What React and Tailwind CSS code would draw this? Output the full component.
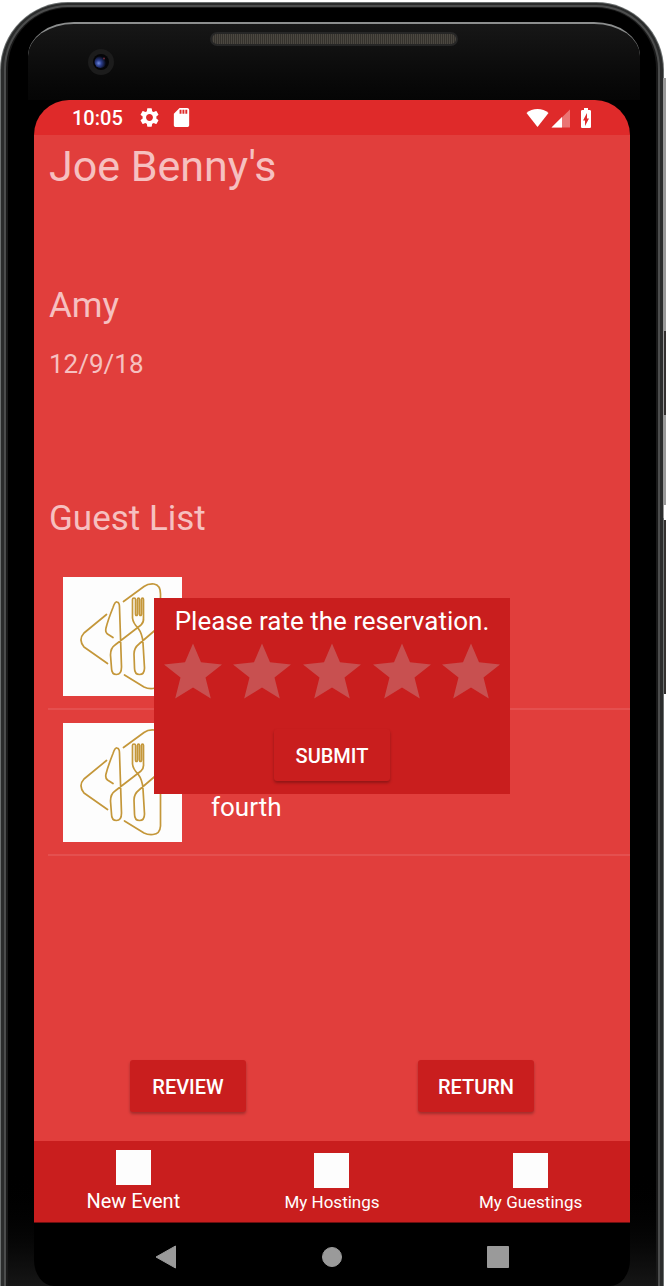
import React from "react";
import { MdSettings, MdSdCard, MdBatteryChargingFull } from "react-icons/md";

function Camera() {
  return (
    <svg viewBox="0 0 26 26" className="mt-[3px] ml-[60px] size-[26px]" aria-hidden="true">
      <defs>
        <radialGradient id="lens" cx="0.35" cy="0.6" r="0.6">
          <stop offset="0" stopColor="#6f8be0" />
          <stop offset="0.4" stopColor="#2b3d8a" />
          <stop offset="1" stopColor="#05060f" />
        </radialGradient>
      </defs>
      <circle cx="13" cy="13" r="13" fill="#1c1c1c" />
      <circle cx="13" cy="13" r="8" fill="#050507" />
      <circle cx="12.5" cy="13" r="6" fill="url(#lens)" />
      <circle cx="16" cy="9.5" r="1" fill="#6b2a3a" />
    </svg>
  );
}

function Hardware() {
  return (
    <div className="pr-[16px] pl-[20px] pt-[14px]">
      <div className="flex h-[78px] flex-col rounded-t-[46px_34px] border-t-2 border-[#8c8e8e] bg-linear-to-b from-[#171717] to-[#050505]">
        <div className="mt-2 h-[14px] w-[248px] self-center rounded-full border-2 border-[#262626] bg-[repeating-linear-gradient(90deg,#35322d_0px,#35322d_1px,#4c4841_1px,#4c4841_2px)]" />
        <Camera />
      </div>
    </div>
  );
}

function StatusBar() {
  return (
    <div className="flex h-[35px] items-center justify-between rounded-t-[36px] bg-[#df2a2a] pr-[32px] pl-[38px] text-white">
      <div className="flex items-center">
        <span className="w-[66px] text-xl leading-6 font-medium">10:05</span>
        <MdSettings size={23} />
        <MdSdCard size={23} className="ml-[9px]" />
      </div>
      <div className="flex items-center">
        <svg viewBox="0 0 44 20" className="h-5 w-11" aria-hidden="true">
          <path d="M0.5 5C6-0.3 17-0.3 22.500 5L11.500 19Z" fill="#fff" />
          <path d="M25.500 19.500L44 1.500V19.500Z" fill="#fff" opacity="0.35" />
          <path d="M25.500 19.500L36 9V19.500Z" fill="#fff" />
        </svg>
        <MdBatteryChargingFull size={24} className="ml-[4px]" />
      </div>
    </div>
  );
}

function CutleryLogo() {
  return (
    <svg viewBox="0 0 119 119" className="size-[119px] bg-[#fdfdfd]" role="img" aria-label="Guest picture">
      <g fill="none" stroke="#c4973a" strokeWidth="1.700" strokeLinecap="round" strokeLinejoin="round">
        <path d="M43.500 37.500L21 56Q15 62.500 21 70L44.500 86.500" />
        <path d="M60.500 24.500L81 9.500Q85 6.500 91 7Q97.500 8 97.500 17V103Q97 111 90 111.500Q85 112 81 110L61.500 98" />
        <path d="M50 60.500L44.500 57Q42 55 43 51Q45 43 50 30.500Q52 24.500 54 25Q56.500 25.500 56.500 30L58.500 90Q58.500 97.500 53.500 97.500Q48.500 97.500 48.500 91L47.500 78Q47.500 71 52 68L78 48Q81 45 80.500 41V22.500Q80.500 21 79.500 21T78.500 22.500V36.500Q78.500 38.500 77.500 38.500T76.500 36.500V22.500Q76.500 21 75.500 21T74.500 22.500V36.500Q74.500 38.500 73.500 38.500T72.500 36.500V22.500Q72.500 21 71 21T69.500 22.500V41Q70 46 75 51Q79.500 57 80 66L81.500 91Q81.500 97.500 76.500 97.500Q71.500 97.500 71.500 91L71 77Q71 71 76 67L97 49" />
      </g>
    </svg>
  );
}

function GuestRow({ name }) {
  return (
    <li className="ml-[14px] flex items-end border-b-2 border-[#e4504f] pt-[13px] pb-[12px] pl-[15px]">
      <CutleryLogo />
      {name && <span className="mb-[19px] ml-[29px] text-[26px] leading-8 text-white">{name}</span>}
    </li>
  );
}

function RaisedButton({ children, className = "" }) {
  return (
    <button
      type="button"
      className={
        "h-[52px] w-[116px] rounded-[3px] bg-[#c91e1e] pt-[2px] text-xl leading-6 font-medium text-white shadow-[0_2px_3px_rgba(0,0,0,0.28)] " +
        className
      }
    >
      {children}
    </button>
  );
}

function Star({ value }) {
  return (
    <label className="flex flex-1 cursor-pointer justify-center">
      <input type="radio" name="rating" value={value} aria-label={value + " stars"} className="sr-only" />
      <svg viewBox="0 0 58 56" className="h-[56px] w-[58px]" aria-hidden="true">
        <path
          d="M29 0.500L37 19.200L58 21.500L41.500 34.500L46.800 55.500L29 44.500L11.200 55.500L16.500 34.500L0 21.500L21 19.200Z"
          fill="#c85050"
        />
      </svg>
    </label>
  );
}

function RatingDialog() {
  return (
    <form
      role="dialog"
      aria-label="Rate reservation"
      className="absolute top-[463px] left-1/2 flex h-[196px] w-[356px] -translate-x-1/2 flex-col items-center bg-[#c91e1e] px-1 pt-[7px]"
    >
      <p className="text-[26px] leading-8 text-white">Please rate the reservation.</p>
      <div className="mt-[6px] flex w-full">
        {[1, 2, 3, 4, 5].map((n) => (
          <Star key={n} value={n} />
        ))}
      </div>
      <RaisedButton className="mt-[30px]">SUBMIT</RaisedButton>
    </form>
  );
}

function NavTab({ label, active }) {
  return (
    <a
      href="#"
      className={
        active
          ? "flex flex-col items-center gap-1 pt-[9px] text-xl leading-6"
          : "flex flex-col items-center gap-1 pt-[12px] text-[17px] leading-5"
      }
    >
      <span className="size-[35px] bg-[#fdfdfd]" />
      {label}
    </a>
  );
}

function SystemButton({ label, children }) {
  return (
    <button type="button" aria-label={label} className="size-6">
      <svg viewBox="0 0 24 24" className="size-6" fill="#9a9a9a" stroke="#9a9a9a" strokeLinejoin="round">
        {children}
      </svg>
    </button>
  );
}

export default function App() {
  return (
    <div className="relative min-h-screen overflow-hidden bg-white pt-[2px] pr-[2px] font-['Roboto',sans-serif]">
      <div className="absolute top-[78px] right-0 h-[440px] w-[3px] bg-[#999999]" />
      <div className="absolute top-[331px] right-0 h-[84px] w-[2px] bg-[#33302f]" />
      <div className="absolute top-[505px] right-0 h-[15px] w-[2px] bg-white" />
      <div className="absolute top-[520px] right-0 h-[174px] w-[2px] bg-[#33302f]" />
      <div className="rounded-t-[68px] bg-[#6c7070] px-[1px] pt-[1px]">
        <div className="rounded-t-[67px] bg-[#2b2c2c] px-[3px] pt-[2px]">
          <div className="rounded-t-[64px] bg-[#4c4d4d] px-[2px] pt-[2px]">
            <div className="rounded-t-[62px] bg-[#191919] px-[2px] pt-[1px]">
              <div className="rounded-t-[60px] bg-black">
                <Hardware />
                <div className="bg-linear-to-b from-black from-90% to-[#161616] px-[26px]">
                  <div className="overflow-hidden rounded-b-[20px_26px] bg-black">
                    <StatusBar />
                    <main className="relative flex min-h-[1006px] flex-col bg-[#e13e3c] text-[#f6c0c0]">
                      <div className="px-[15px] pt-[5px]">
                        <h1 className="text-[43px] leading-[52px]">Joe Benny&apos;s</h1>
                        <h2 className="mt-[93px] text-[35px] leading-[41px]">Amy</h2>
                        <p className="mt-[22px] text-[26px] leading-8">12/9/18</p>
                        <h2 className="mt-[118px] text-[35px] leading-[41px]">Guest List</h2>
                      </div>
                      <ul className="mt-[25px]">
                        <GuestRow />
                        <GuestRow name="fourth" />
                      </ul>
                      <div className="mt-auto flex justify-between px-24 pb-[29px]">
                        <RaisedButton>REVIEW</RaisedButton>
                        <RaisedButton>RETURN</RaisedButton>
                      </div>
                      <RatingDialog />
                    </main>
                    <nav className="grid h-[82px] grid-cols-3 border-b border-[#6b0f10] bg-[#c91e1e] text-white">
                      <NavTab label="New Event" active />
                      <NavTab label="My Hostings" />
                      <NavTab label="My Guestings" />
                    </nav>
                    <div className="flex h-[63px] items-center justify-center gap-[142px] pt-[4px]">
                      <SystemButton label="Back">
                        <path d="M2 12L21.500 1V23Z" />
                      </SystemButton>
                      <SystemButton label="Home">
                        <circle cx="12" cy="12" r="9.500" />
                      </SystemButton>
                      <SystemButton label="Overview">
                        <rect x="1.500" y="1.500" width="21" height="21" />
                      </SystemButton>
                    </div>
                  </div>
                </div>
              </div>
            </div>
          </div>
        </div>
      </div>
    </div>
  );
}
